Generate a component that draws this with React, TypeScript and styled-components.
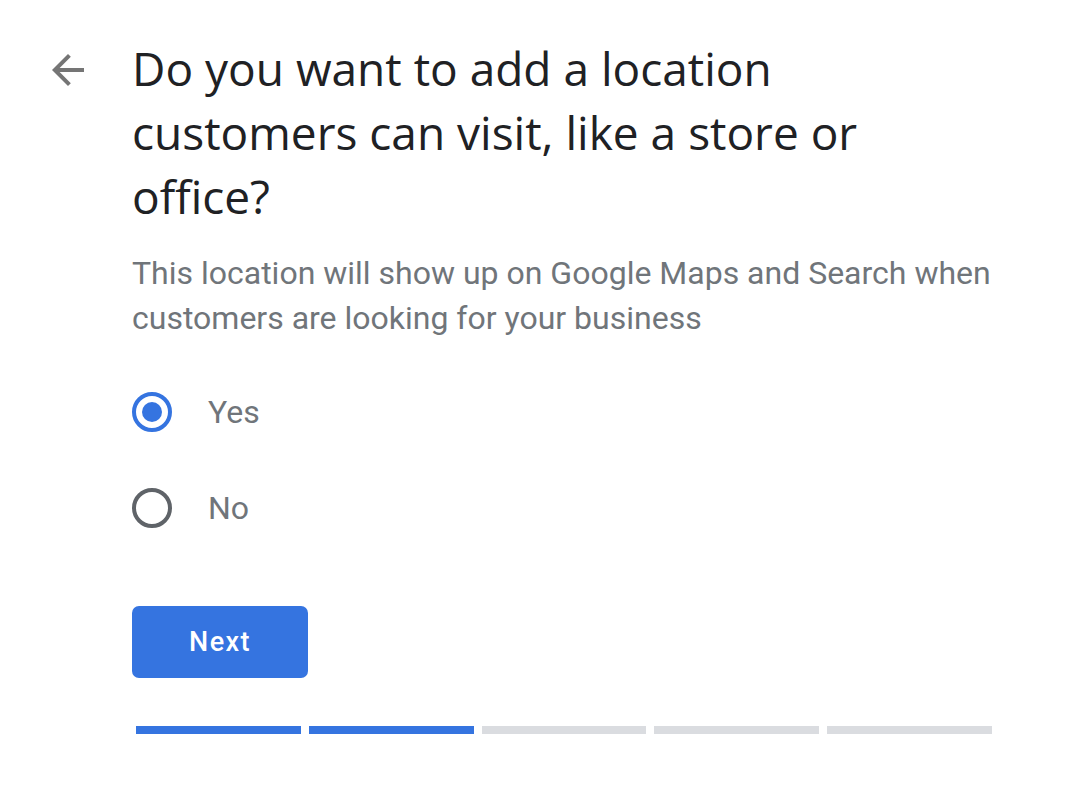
import styled, { createGlobalStyle } from 'styled-components'

const GlobalStyle = createGlobalStyle`
  html, body {
    margin: 0;
    padding: 0;
    background: #fff;
  }
  body {
    font-family: Roboto, "Liberation Sans", Arial, sans-serif;
  }
`

const Page = styled.div`
  display: flex;
  align-items: flex-start;
  gap: 40px;
  padding: 36px 0 0 44px;
`

const BackButton = styled.button`
  width: 48px;
  height: 48px;
  margin-top: 10px;
  padding: 0;
  border: none;
  background: transparent;
  display: flex;
  align-items: center;
  justify-content: center;
  cursor: pointer;
  color: #757575;
`

const Main = styled.div`
  display: flex;
  flex-direction: column;
  align-items: flex-start;
  width: 870px;
`

const Title = styled.h1`
  margin: 0;
  font-family: "Open Sans", Roboto, sans-serif;
  font-weight: 400;
  font-size: 46px;
  line-height: 64px;
  color: #202124;
  max-width: 780px;
`

const Subtitle = styled.p`
  margin: 23px 0 0;
  font-size: 32px;
  line-height: 45px;
  color: #70757a;
`

const Options = styled.div`
  display: flex;
  flex-direction: column;
  gap: 48px;
  margin-top: 47px;
`

const Option = styled.label`
  display: flex;
  align-items: center;
  gap: 36px;
  height: 48px;
  cursor: pointer;
`

const Radio = styled.span<{ $checked?: boolean }>`
  box-sizing: border-box;
  width: 40px;
  height: 40px;
  border-radius: 50%;
  border: 4px solid ${p => (p.$checked ? '#3574e0' : '#5f6368')};
  display: flex;
  align-items: center;
  justify-content: center;

  &::after {
    content: '';
    width: 20px;
    height: 20px;
    border-radius: 50%;
    background: #3574e0;
    display: ${p => (p.$checked ? 'block' : 'none')};
  }
`

const OptionLabel = styled.span`
  font-size: 32px;
  color: #70757a;
`

const NextButton = styled.button`
  margin-top: 74px;
  width: 176px;
  height: 72px;
  border: none;
  border-radius: 7px;
  background: #3574e0;
  color: #fff;
  font-family: Roboto, "Liberation Sans", sans-serif;
  font-size: 27px;
  font-weight: 500;
  letter-spacing: 1.4px;
  cursor: pointer;
`

const Progress = styled.div`
  display: grid;
  grid-template-columns: repeat(5, 1fr);
  gap: 8px;
  width: 856px;
  margin: 48px 0 0 4px;
`

const Segment = styled.div<{ $done?: boolean }>`
  height: 8px;
  background: ${p => (p.$done ? '#3574e0' : '#dadce0')};
`

const steps = [true, true, false, false, false]

export default function App() {
  return (
    <>
      <GlobalStyle />
      <Page>
        <BackButton aria-label="Back">
          <svg width="48" height="48" viewBox="0 0 24 24" fill="currentColor">
            <path d="M20 11H7.83l5.59-5.59L12 4l-8 8 8 8 1.41-1.41L7.83 13H20v-2z" />
          </svg>
        </BackButton>
        <Main>
          <Title>Do you want to add a location customers can visit, like a store or office?</Title>
          <Subtitle>
            This location will show up on Google Maps and Search when customers are looking for your business
          </Subtitle>
          <Options>
            <Option>
              <Radio $checked />
              <OptionLabel>Yes</OptionLabel>
            </Option>
            <Option>
              <Radio />
              <OptionLabel>No</OptionLabel>
            </Option>
          </Options>
          <NextButton>Next</NextButton>
          <Progress>
            {steps.map((done, i) => (
              <Segment key={i} $done={done} />
            ))}
          </Progress>
        </Main>
      </Page>
    </>
  )
}
